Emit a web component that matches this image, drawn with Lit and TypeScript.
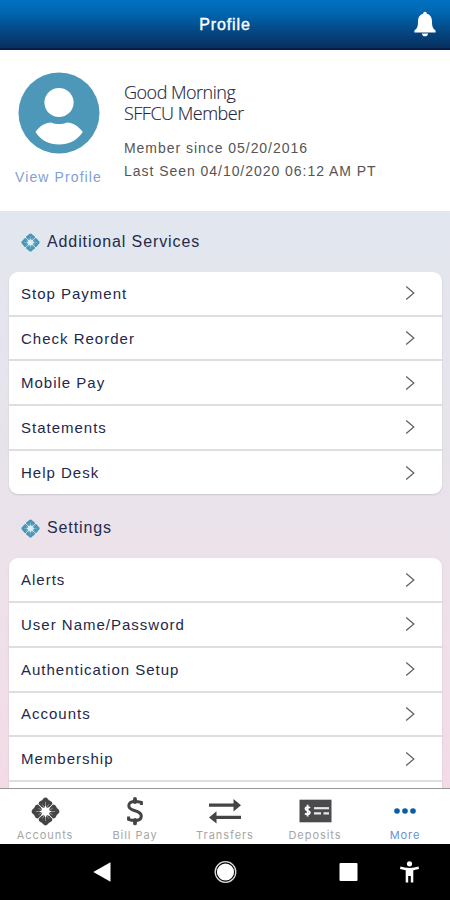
import { LitElement, html, svg, css } from "lit";
import { customElement, property } from "lit/decorators.js";

const emblem = (fg: string, line: string, core: string) => svg`
  ${[0, 90, 180, 270].map(
    (a) => svg`<g transform="rotate(${a} 15 15)">
      <path d="M15 14.4 L7.8 7.2 Q7.8 4.6 10.2 3.9 Q11.8 3.4 12.4 2 Q15 -.8 17.6 2 Q18.2 3.4 19.8 3.9 Q22.2 4.6 22.2 7.2 Z" fill=${fg}/>
      <path d="M15 5 V11 M11.6 7.6 L14 11.5 M18.4 7.6 L16 11.5" stroke=${line} stroke-width=".9" fill="none"/>
    </g>`
  )}
  <path d="M15 8.6 L16.4 11.4 L19.6 10.4 L18.6 13.6 L21.4 15 L18.6 16.4 L19.6 19.6 L16.4 18.6 L15 21.4 L13.6 18.6 L10.4 19.6 L11.4 16.4 L8.6 15 L11.4 13.6 L10.4 10.4 L13.6 11.4 Z" fill=${core}/>`;

const tabIcons: Record<string, unknown> = {
  accounts: html`<svg width="29" height="29" viewBox="0 0 30 30">${emblem("#444446", "#9a9a9a", "#fff")}</svg>`,
  bill: html`<svg width="18" height="30" viewBox="0 0 18 30">
    <path d="M15.4 9 V6.4 C13 5.6 11 5.4 9 5.4 C5 5.4 2.8 7 2.8 9.7 C2.8 12.6 5.2 13.6 9 14.7 C13 15.8 15.3 17 15.3 20 C15.3 23 12.8 24.5 9 24.5 C6.4 24.5 4.4 24.1 2.6 23.4 V20.6" fill="none" stroke="#444446" stroke-width="3"/>
    <path d="M9 2.8 V6 M9 24 V27.4" stroke="#444446" stroke-width="3.8" stroke-linecap="round"/></svg>`,
  transfers: html`<svg width="34" height="28" viewBox="0 0 34 28">
    <path d="M1 8.2 H27 M7 20.4 H33" stroke="#444446" stroke-width="3.2" fill="none"/>
    <path d="M25.5 2 L33 8.2 L25.5 14.4 Z M8.5 14.2 L1 20.4 L8.5 26.6 Z" fill="#444446"/></svg>`,
  deposits: html`<svg width="33" height="24" viewBox="0 0 33 24">
    <rect x=".5" y=".7" width="32" height="22.6" fill="#4b4b4d"/>
    <path d="M11 8.9 C10.3 8.1 6.6 7.4 6.4 9.6 C6.3 12 10.9 11 10.9 13.6 C10.7 15.9 7.2 15.6 6 14.5 M8.6 5.8 V17.6" fill="none" stroke="#fff" stroke-width="1.8"/>
    <path d="M15 9.2 H30" stroke="#e8e8e8" stroke-width="2.2"/>
    <path d="M15 14.3 H22 M24.5 14.3 H30" stroke="#e8e8e8" stroke-width="2.2"/></svg>`,
  more: html`<svg width="22" height="8" viewBox="0 0 22 8">
    <circle cx="3" cy="4" r="2.8" fill="#0a5cab"/><circle cx="11" cy="4" r="2.8" fill="#0a5cab"/><circle cx="19" cy="4" r="2.8" fill="#0a5cab"/></svg>`,
};

@customElement("menu-group")
class MenuGroup extends LitElement {
  @property() heading = "";
  @property({ attribute: false }) items: string[] = [];
  static styles = css`
    :host { display: block; }
    .heading {
      display: flex; align-items: center; gap: 7px; height: 20px;
      padding-left: 21px; font-size: 16px; letter-spacing: 0.9px; color: #252a4c;
    }
    .heading svg { flex: none; }
    .card { margin: 20px 8px 0 9px; background: #fff; border-radius: 9px; box-shadow: 0 1px 2px rgba(90, 80, 100, 0.2); }
    .row {
      display: flex; align-items: center; justify-content: space-between;
      box-sizing: border-box; height: 44.7px; padding: 0 27px 0 12px;
      border-bottom: 2px solid #dedee1; font-size: 15px; letter-spacing: 1px; color: #23284b;
    }
    .row:last-child { border-bottom: 0; height: 43.7px; }
  `;
  render() {
    return html`
      <div class="heading">
        <svg width="19" height="19" viewBox="0 0 30 30">${emblem("#4796b8", "#8fc4dc", "#dceef6")}</svg>
        <span>${this.heading}</span>
      </div>
      <div class="card">
        ${this.items.map(
          (t) => html`<div class="row"><span>${t}</span>
            <svg width="10" height="16" viewBox="0 0 10 16"><path d="M1.2 1.4 L8.8 8 L1.2 14.6" fill="none" stroke="#626266" stroke-width="1.3"/></svg></div>`
        )}
      </div>`;
  }
}

@customElement("app-root")
class AppRoot extends LitElement {
  static styles = css`
    :host {
      display: flex; flex-direction: column; width: 450px; height: 900px; overflow: hidden;
      font-family: "Liberation Sans", Arial, sans-serif; background: #fff;
    }
    .top {
      flex: none; box-sizing: border-box; height: 50px; border-bottom: 2px solid #0a1d4a;
      background: linear-gradient(#0071c1, #0067b0 25%, #054784 65%, #07305f);
      display: grid; grid-template-columns: 50px 1fr 50px; align-items: center; color: #fff;
    }
    .title {
      grid-column: 2; text-align: center; font-size: 16px; letter-spacing: 0.9px;
      -webkit-text-stroke: 0.4px #fff; padding-top: 1px;
    }
    .bell { justify-self: center; }
    .profile { flex: none; height: 161px; display: flex; background: #fff; }
    .left { width: 117px; display: flex; flex-direction: column; align-items: center; padding-top: 22px; }
    .avatar { display: block; }
    .view { margin-top: 14px; font-size: 14px; line-height: 18px; letter-spacing: 1.1px; color: #7f9fd6; white-space: nowrap; }
    .info { padding: 32px 0 0 7px; color: #555; font-size: 14px; line-height: 23px; letter-spacing: 0.96px; white-space: nowrap; }
    .hello { font-family: "Open Sans", sans-serif; font-weight: 300; font-size: 18px; line-height: 21px; letter-spacing: -0.5px; color: #23263c; -webkit-text-stroke: 0.15px #23263c; }
    .hello + .hello { margin-bottom: 13px; }
    .content {
      flex: 1; min-height: 0; overflow: hidden; padding-top: 21px;
      background: linear-gradient(#e1e7f0, #e4e5ed 12%, #e7e3eb 42%, #ece2ea 60%, #f3dbe6);
    }
    .content menu-group + menu-group { margin-top: 24px; }
    .tabs {
      flex: none; height: 55px; border-top: 1px solid #97979a; background: #fff;
      display: grid; grid-template-columns: repeat(5, 1fr);
    }
    .tab { display: flex; flex-direction: column; align-items: center; padding-top: 7px; }
    .icon { height: 30px; display: flex; align-items: center; }
    .label { font-family: Inter, sans-serif; font-size: 11px; line-height: 14px; margin-top: 2px; letter-spacing: 0.95px; color: #a6a6a6; white-space: nowrap; }
    .active { color: #6593cf; }
    .system { flex: none; height: 56px; background: #000; display: block; }
  `;
  render() {
    const tabs = [
      ["accounts", "Accounts"], ["bill", "Bill Pay"], ["transfers", "Transfers"],
      ["deposits", "Deposits"], ["more", "More"],
    ];
    return html`
      <header class="top">
        <div class="title">Profile</div>
        <svg class="bell" width="24" height="28" viewBox="0 0 24 28">
          <path d="M12 1.8 C13.2 1.8 13.8 2.6 13.8 3.8 C17.5 4.8 19 7.8 19 11.5 C19 17 20 18.6 22.6 20.6 V22.4 H1.4 V20.6 C4 18.6 5 17 5 11.5 C5 7.8 6.5 4.8 10.2 3.8 C10.2 2.6 10.8 1.8 12 1.8 Z M9 23.4 H15 C15 25.2 13.8 26.3 12 26.3 C10.2 26.3 9 25.2 9 23.4 Z" fill="#fff"/>
        </svg>
      </header>
      <section class="profile">
        <div class="left">
          <svg class="avatar" width="82" height="82" viewBox="0 0 82 82">
            <circle cx="41" cy="41" r="40.5" fill="#4d98b8"/>
            <circle cx="41" cy="30.5" r="14.6" fill="#fff"/>
            <path d="M17.5 60 C22 54 27 50.5 33 50.5 C38 52.6 44 52.6 49 50.5 C55 50.5 60 54 64.8 60 C59 68.5 51 72.4 41 72.4 C31 72.4 23 68.5 17.5 60 Z" fill="#fff"/>
          </svg>
          <div class="view">View Profile</div>
        </div>
        <div class="info">
          <div class="hello">Good Morning</div>
          <div class="hello">SFFCU Member</div>
          <div>Member since 05/20/2016</div>
          <div>Last Seen 04/10/2020 06:12 AM PT</div>
        </div>
      </section>
      <main class="content">
        <menu-group heading="Additional Services" .items=${["Stop Payment", "Check Reorder", "Mobile Pay", "Statements", "Help Desk"]}></menu-group>
        <menu-group heading="Settings" .items=${["Alerts", "User Name/Password", "Authentication Setup", "Accounts", "Membership", ""]}></menu-group>
      </main>
      <nav class="tabs">
        ${tabs.map(
          ([icon, label]) => html`<div class="tab">
            <div class="icon">${tabIcons[icon]}</div>
            <div class="label ${icon === "more" ? "active" : ""}">${label}</div>
          </div>`
        )}
      </nav>
      <svg class="system" width="450" height="56" viewBox="0 0 450 56">
        <path d="M93.3 28 L110.5 18.2 V37.8 Z" fill="#fff"/>
        <circle cx="225.5" cy="28" r="10.3" fill="none" stroke="#ddd" stroke-width="1.3"/>
        <circle cx="225.5" cy="28" r="8.6" fill="#fff"/>
        <rect x="339.5" y="19" width="18" height="18" rx="1" fill="#fff"/>
        <circle cx="409.5" cy="19.8" r="2.6" fill="#fff"/>
        <path d="M400.5 22.6 C406 24.4 413 24.4 418.5 22.6 L419 25 L413.3 26.2 V38.6 H410.8 V32 H408.2 V38.6 H405.7 V26.2 L400 25 Z" fill="#fff"/>
      </svg>`;
  }
}
